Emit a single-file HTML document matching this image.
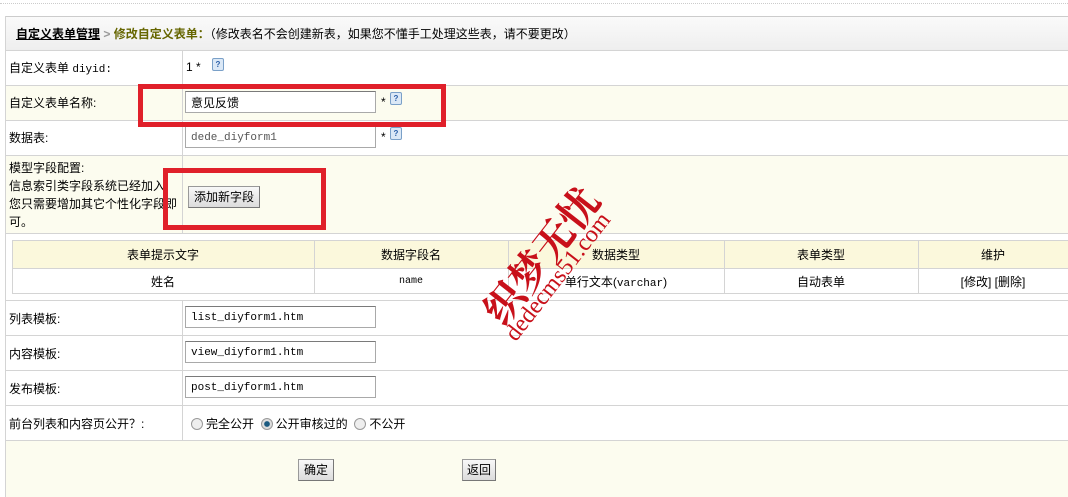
<!DOCTYPE html>
<html><head><meta charset="utf-8"><style>
body{margin:0;width:1068px;height:497px;overflow:hidden;background:#fff;font-family:"Liberation Sans","Noto Sans CJK SC",sans-serif;font-size:12px;color:#000;position:relative}
.a{position:absolute}
.h{border-top:1px solid #d4d4d4;position:absolute;left:5px;right:0}
.v{border-left:1px solid #d4d4d4;position:absolute}
.cream{background:#fcfcef}
.inp{position:absolute;border:1px solid #a9a9a9;border-top-color:#7a7a7a;background:#fff;height:22px;line-height:22px;padding-left:5px;box-sizing:border-box;font-family:"Liberation Mono","Noto Sans CJK SC",monospace;font-size:11px}
.q{position:absolute;width:10px;height:11px;border:1px solid #7aa0c8;border-radius:2px;background:#dbe8f6;font-size:8px;line-height:11px;text-align:center;color:#2a5fa8;font-weight:bold}
.btn{position:absolute;border:1px solid #999;border-right-color:#777;border-bottom-color:#777;background:linear-gradient(#f8f8f8,#dcdcdc);height:20px;line-height:20px;text-align:center;font-size:12px}
.red{position:absolute;border:5px solid #e0202a}
.rad{display:inline-block;width:10px;height:10px;border:1px solid #999;border-radius:50%;background:#eee;vertical-align:-2px;margin-right:3px}
</style></head><body>
<div class="a" style="left:0;top:3px;width:1068px;border-top:1px dotted #ccc"></div>
<div class="a" style="left:5px;top:16px;width:1063px;height:34px;background:linear-gradient(#fafafa,#eeeeee);border-top:1px solid #ccc"></div>
<div class="a" style="left:16px;top:25px;font-weight:bold;font-size:12px"><u>自定义表单管理</u> <span style="color:#999">&gt;</span> <span style="color:#666600">修改自定义表单：</span><span style="font-weight:normal;font-size:12px">（修改表名不会创建新表，如果您不懂手工处理这些表，请不要更改）</span></div>
<div class="a cream" style="left:5px;top:85px;width:1063px;height:35px"></div>
<div class="a cream" style="left:5px;top:155px;width:1063px;height:78px"></div>
<div class="a cream" style="left:5px;top:440px;width:1063px;height:57px"></div>
<div class="v" style="left:5px;top:16px;height:481px"></div>
<div class="h" style="top:50px"></div><div class="h" style="top:85px"></div><div class="h" style="top:120px"></div><div class="h" style="top:155px"></div><div class="h" style="top:233px"></div>
<div class="h" style="top:300px"></div><div class="h" style="top:335px"></div><div class="h" style="top:370px"></div><div class="h" style="top:405px"></div><div class="h" style="top:440px"></div>
<div class="v" style="left:182px;top:50px;height:183px"></div>
<div class="v" style="left:182px;top:300px;height:140px"></div>
<div class="a" style="left:9px;top:59px">自定义表单 <span style="font-family:'Liberation Mono',monospace;font-size:11px">diyid:</span></div>
<div class="a" style="left:186px;top:60px">1 *</div><div class="q" style="left:212px;top:58px">?</div>
<div class="a" style="left:9px;top:94px">自定义表单名称:</div>
<div class="inp" style="left:185px;top:91px;width:191px;font-family:'Liberation Sans','Noto Sans CJK SC',sans-serif;font-size:12px">意见反馈</div>
<div class="a" style="left:381px;top:95px">*</div><div class="q" style="left:390px;top:92px">?</div>
<div class="a" style="left:9px;top:129px">数据表:</div>
<div class="inp" style="left:185px;top:126px;width:191px;color:#555">dede_diyform1</div>
<div class="a" style="left:381px;top:130px">*</div><div class="q" style="left:390px;top:127px">?</div>
<div class="a" style="left:9px;top:159px;line-height:18px;width:170px">模型字段配置:<br>信息索引类字段系统已经加入<br>您只需要增加其它个性化字段即<br>可。</div>
<div class="btn" style="left:188px;top:186px;width:70px">添加新字段</div>
<div class="a" style="left:12px;top:240px;width:1056px;height:28px;background:#fbf8dc"></div>
<div class="a" style="left:12px;top:240px;width:1056px;height:54px;border:1px solid #d4d4d4;border-right:none;box-sizing:border-box"></div>
<div class="a" style="left:12px;top:268px;width:1056px;border-top:1px solid #d4d4d4"></div>
<div class="v" style="left:314px;top:240px;height:54px"></div><div class="v" style="left:508px;top:240px;height:54px"></div><div class="v" style="left:724px;top:240px;height:54px"></div><div class="v" style="left:918px;top:240px;height:54px"></div>
<div class="a" style="left:12px;top:246px;width:302px;text-align:center">表单提示文字</div>
<div class="a" style="left:314px;top:246px;width:194px;text-align:center">数据字段名</div>
<div class="a" style="left:508px;top:246px;width:216px;text-align:center">数据类型</div>
<div class="a" style="left:724px;top:246px;width:194px;text-align:center">表单类型</div>
<div class="a" style="left:918px;top:246px;width:150px;text-align:center">维护</div>
<div class="a" style="left:12px;top:273px;width:302px;text-align:center">姓名</div>
<div class="a" style="left:314px;top:276px;width:194px;text-align:center;font-family:'Liberation Mono',monospace;font-size:10px;line-height:12px">name</div>
<div class="a" style="left:508px;top:273px;width:216px;text-align:center">单行文本(<span style="font-family:'Liberation Mono',monospace;font-size:11px">varchar</span>)</div>
<div class="a" style="left:724px;top:273px;width:194px;text-align:center">自动表单</div>
<div class="a" style="left:918px;top:273px;width:150px;text-align:center">[修改] [删除]</div>
<div class="a" style="left:9px;top:310px">列表模板:</div>
<div class="inp" style="left:185px;top:306px;width:191px">list_diyform1.htm</div>
<div class="a" style="left:9px;top:345px">内容模板:</div>
<div class="inp" style="left:185px;top:341px;width:191px">view_diyform1.htm</div>
<div class="a" style="left:9px;top:380px">发布模板:</div>
<div class="inp" style="left:185px;top:376px;width:191px">post_diyform1.htm</div>
<div class="a" style="left:9px;top:415px">前台列表和内容页公开？:</div>
<div class="a" style="left:191px;top:415px"><span class="rad"></span>完全公开 &nbsp;<span class="rad" style="background:radial-gradient(#1a5a80 35%,#ddd 45%)"></span>公开审核过的 &nbsp;<span class="rad"></span>不公开</div>
<div class="btn" style="left:298px;top:459px;width:34px">确定</div>
<div class="btn" style="left:462px;top:459px;width:32px">返回</div>
<div class="red" style="left:138px;top:84px;width:298px;height:33px"></div>
<div class="red" style="left:163px;top:168px;width:153px;height:52px"></div>
<div class="a" style="transform:rotate(-52deg);transform-origin:left top;color:#c8101a;font-size:40px;font-weight:bold;font-family:'Noto Serif CJK SC',serif;white-space:nowrap;top:300px;left:468px">织梦无忧</div>
<div class="a" style="transform:rotate(-52deg);transform-origin:left top;color:#c8101a;font-size:24px;font-family:'Liberation Serif',serif;white-space:nowrap;top:330px;left:500px">dedecms51.com</div>
</body></html>
